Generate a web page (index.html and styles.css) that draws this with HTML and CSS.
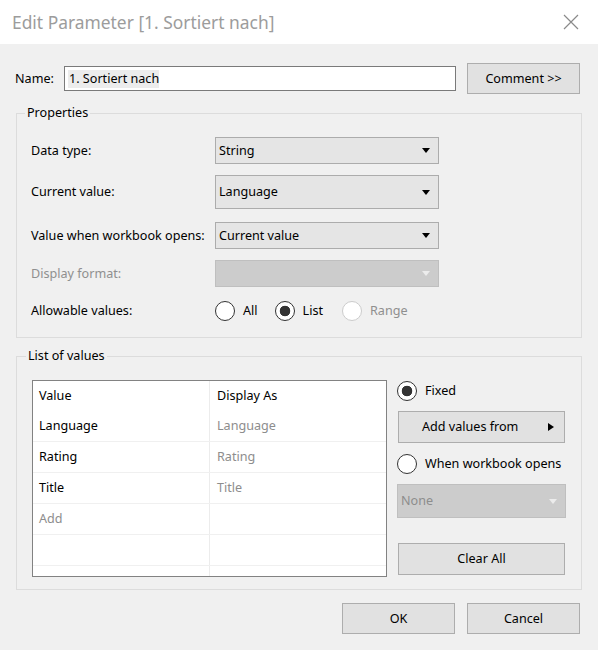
FILE: index.html
```html
<!DOCTYPE html>
<html>
<head>
<meta charset="utf-8">
<link rel="stylesheet" href="styles.css">
</head>
<body>
<div class="dialog">
  <div class="titlebar">
    <span class="title">Edit Parameter [1. Sortiert nach]</span>
    <svg class="close" width="16" height="16" viewBox="0 0 16 16"><path d="M1 1 L15 15 M15 1 L1 15" stroke="#8a8a8a" stroke-width="1.2" fill="none"/></svg>
  </div>
  <div class="content">
    <div class="name-row">
      <span class="name-label">Name:</span>
      <div class="textbox"><span class="sel">1. Sortiert nach</span></div>
      <div class="btn comment">Comment &gt;&gt;</div>
    </div>

    <fieldset class="group props">
      <legend>Properties</legend>
      <div class="prop-row r1">
        <span class="lbl">Data type:</span>
        <div class="combo h27"><span>String</span><i class="arrow"></i></div>
      </div>
      <div class="prop-row r2">
        <span class="lbl">Current value:</span>
        <div class="combo h34"><span>Language</span><i class="arrow"></i></div>
      </div>
      <div class="prop-row r3">
        <span class="lbl">Value when workbook opens:</span>
        <div class="combo h27"><span>Current value</span><i class="arrow"></i></div>
      </div>
      <div class="prop-row r4">
        <span class="lbl disabled">Display format:</span>
        <div class="combo h27 off"><span></span><i class="arrow"></i></div>
      </div>
      <div class="prop-row r5 radios-row">
        <span class="lbl">Allowable values:</span>
        <div class="radios">
          <span class="radio"><i class="dot"></i>All</span>
          <span class="radio on"><i class="dot"></i>List</span>
          <span class="radio off"><i class="dot"></i>Range</span>
        </div>
      </div>
    </fieldset>

    <fieldset class="group list">
      <legend>List of values</legend>
      <div class="list-body">
        <div class="grid">
          <div class="grow head"><span class="c1">Value</span><span class="c2">Display As</span></div>
          <div class="grow"><span class="c1">Language</span><span class="c2 muted">Language</span></div>
          <div class="grow"><span class="c1">Rating</span><span class="c2 muted">Rating</span></div>
          <div class="grow"><span class="c1">Title</span><span class="c2 muted">Title</span></div>
          <div class="grow"><span class="c1 muted">Add</span><span class="c2"></span></div>
          <div class="grow"><span class="c1"></span><span class="c2"></span></div>
          <div class="grow last"><span class="c1"></span><span class="c2"></span></div>
        </div>
        <div class="side">
          <span class="radio on fixed"><i class="dot"></i>Fixed</span>
          <div class="btn addvals"><span>Add values from</span><i class="rarrow"></i></div>
          <span class="radio when"><i class="dot"></i>When workbook opens</span>
          <div class="combo off none"><span>None</span><i class="arrow"></i></div>
          <div class="btn clear">Clear All</div>
        </div>
      </div>
    </fieldset>

    <div class="footer">
      <div class="btn ok">OK</div>
      <div class="btn cancel">Cancel</div>
    </div>
  </div>
</div>
</body>
</html>
```

FILE: styles.css
```css
html, body {
  margin: 0;
  padding: 0;
}
body {
  width: 598px;
  height: 650px;
  background: #f0f0f0;
  font-family: "Noto Sans", "Open Sans", sans-serif;
  font-size: 12.6px;
  line-height: 18px;
  color: #000;
  overflow: hidden;
}
.dialog {
  width: 598px;
  height: 650px;
}
.titlebar {
  height: 44px;
  background: #fff;
  display: flex;
  align-items: center;
  justify-content: space-between;
  padding: 0 19px 0 12px;
  box-sizing: border-box;
}
.title {
  font-size: 17.4px;
  color: #9c9c9c;
}
.close {
  display: block;
  margin-top: -1px;
}
.content {
  padding: 19px 16px 0 16px;
}
.name-row {
  display: flex;
  align-items: center;
  height: 31px;
  margin-left: -1px;
  margin-right: 2px;
}
.name-label {
  width: 49px;
  padding-top: 1px;
}
.textbox {
  width: 392px;
  height: 25px;
  box-sizing: border-box;
  border: 1px solid #7a7a7a;
  background: #fff;
  padding: 0 0 0 3px;
  display: flex;
  align-items: center;
}
.sel {
  background: #ececec;
  padding: 0 0 0 1px;
}
.btn {
  box-sizing: border-box;
  background: #e1e1e1;
  border: 1px solid #adadad;
  display: flex;
  align-items: center;
  justify-content: center;
}
.comment {
  width: 113px;
  height: 31px;
  margin-left: auto;
}
fieldset.group {
  margin: 0;
  border: 1px solid #dcdcdc;
  min-width: 0;
  box-sizing: border-box;
  width: 566px;
}
fieldset.group legend {
  padding: 0 2px;
  margin-left: -6px;
  line-height: 18px;
}
.props {
  margin-top: 10px !important;
  padding: 15px 14px 16px 14px;
}
.prop-row {
  display: flex;
  align-items: center;
}
.r2 { margin-top: 11px; }
.r3 { margin-top: 13px; }
.r4 { margin-top: 11px; }
.r5 { margin-top: 14px; }
.lbl {
  width: 184px;
}
.disabled {
  color: #8f8f8f;
}
.combo {
  box-sizing: border-box;
  width: 224px;
  background: #e5e5e5;
  border: 1px solid #acacac;
  display: flex;
  align-items: center;
  justify-content: space-between;
  padding: 0 8px 0 3px;
}
.combo.h27 { height: 27px; }
.combo.h34 { height: 34px; }
.combo.off {
  background: #cccccc;
  border-color: #bfbfbf;
  color: #8d8d8d;
}
.arrow {
  width: 0;
  height: 0;
  border-left: 4.5px solid transparent;
  border-right: 4.5px solid transparent;
  border-top: 5px solid #000;
}
.combo.off .arrow {
  border-top-color: #ececec;
}
.radios-row {
  height: 20px;
}
.radios {
  display: flex;
  align-items: center;
}
.radio {
  display: flex;
  align-items: center;
  height: 20px;
}
.radio .dot {
  width: 20px;
  height: 20px;
  box-sizing: border-box;
  border: 1.5px solid #333;
  border-radius: 50%;
  background: #fff;
  margin-right: 8px;
}
.radio.on .dot {
  border: 1.5px solid #333;
  background: radial-gradient(circle, #333 0 5px, #fff 5.6px);
}
.radio.off {
  color: #8f8f8f;
}
.radio.off .dot {
  border-color: #cccccc;
}
.radios .radio:nth-child(1) {
  margin-right: 17px;
}
.radios .radio:nth-child(2) {
  margin-right: 19px;
}
.list {
  margin-top: 9px !important;
  padding: 15px 14px 12px 15px;
}
.list-body {
  display: flex;
  align-items: flex-start;
}
.grid {
  width: 355px;
  height: 197px;
  box-sizing: border-box;
  border: 1px solid #828282;
  background: #fff;
  overflow: hidden;
}
.grow {
  display: flex;
  height: 31px;
  box-sizing: border-box;
  border-bottom: 1px solid #f0f0f0;
}
.grow.head {
  height: 30px;
  border-bottom: none;
}
.grow span {
  display: flex;
  align-items: center;
  box-sizing: border-box;
}
.c1 {
  width: 177px;
  padding-left: 6px;
  border-right: 1px solid #ececec;
}
.c2 {
  flex: 1;
  padding-left: 7px;
}
.muted {
  color: #8d8d8d;
}
.side {
  width: 169px;
  margin-left: 10px;
  display: flex;
  flex-direction: column;
  margin-top: 1px;
}
.side .btn {
  margin: 0 1px;
}
.addvals {
  height: 32px;
  margin-top: 10px !important;
  justify-content: flex-start;
  padding-left: 23px;
}
.rarrow {
  width: 0;
  height: 0;
  border-top: 4.5px solid transparent;
  border-bottom: 4.5px solid transparent;
  border-left: 6px solid #000;
  margin-left: auto;
  margin-right: 10px;
}
.when {
  margin-top: 11px;
}
.none {
  width: 169px;
  height: 34px;
  margin-top: 10px;
}
.clear {
  height: 32px;
  margin-top: 25px !important;
}
.footer {
  display: flex;
  justify-content: flex-end;
  margin-top: 13px;
  margin-right: 2px;
}
.ok, .cancel {
  width: 113px;
  height: 31px;
}
.cancel {
  margin-left: 12px;
}
```
